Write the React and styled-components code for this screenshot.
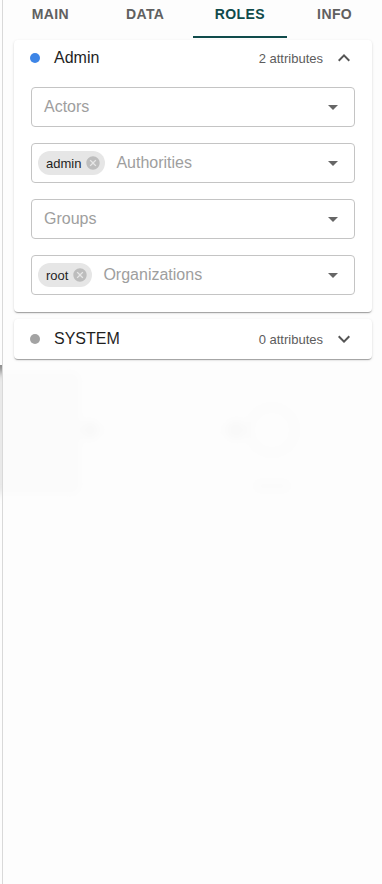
import React from 'react';
import styled, { createGlobalStyle } from 'styled-components';

const GlobalStyle = createGlobalStyle`
  html, body { margin: 0; padding: 0; background: #fdfdfd; }
  body { font-family: "Liberation Sans", Arial, sans-serif; }
`;

const Page = styled.div`
  position: relative;
  width: 382px;
  height: 884px;
  overflow: hidden;
  background: #fdfdfd;
`;

const Canvas = styled.svg`
  position: absolute;
  left: 0;
  top: 0;
`;

const Panel = styled.aside`
  position: absolute;
  left: 2px;
  top: 0;
  right: 0;
  bottom: 0;
  border-left: 1px solid #d9d9d9;
  background: rgba(253, 253, 253, 0.88);
  display: flex;
  flex-direction: column;
`;

const Tabs = styled.nav`
  display: grid;
  grid-template-columns: repeat(4, 1fr);
  height: 38px;
`;

const Tab = styled.div`
  display: flex;
  align-items: flex-start;
  justify-content: center;
  padding-top: 6px;
  box-sizing: border-box;
  font-size: 14px;
  font-weight: 700;
  letter-spacing: 0.4px;
  color: ${p => (p.$active ? '#0f4b4b' : '#606060')};
  border-bottom: 2px solid ${p => (p.$active ? '#0f4b4b' : 'transparent')};
`;

const Body = styled.div`
  padding: 2px 10px 0 11px;
  display: flex;
  flex-direction: column;
  gap: 7px;
`;

const Card = styled.section`
  background: #fff;
  border-radius: 4px;
  box-shadow: 0 2px 1px -1px rgba(0,0,0,0.2), 0 1px 1px 0 rgba(0,0,0,0.14), 0 1px 3px 0 rgba(0,0,0,0.12);
`;

const Header = styled.div`
  display: flex;
  align-items: center;
  height: ${p => (p.$open ? '36px' : '40px')};
  padding: 0 16px;
`;

const Dot = styled.span`
  width: 10px;
  height: 10px;
  border-radius: 50%;
  background: ${p => p.$color};
  margin-right: 14px;
`;

const Name = styled.span`
  flex: 1;
  font-size: 16px;
  color: #1f1f1f;
`;

const Count = styled.span`
  font-size: 13px;
  color: #5c5c5c;
  margin-right: 9px;
`;

const Fields = styled.div`
  display: flex;
  flex-direction: column;
  gap: 16px;
  padding: 11px 17px 17px;
`;

const Field = styled.div`
  height: 40px;
  box-sizing: border-box;
  border: 1px solid #c4c4c4;
  border-radius: 4px;
  display: flex;
  align-items: center;
  padding: 0 16px 0 6px;
  gap: 11px;
`;

const Placeholder = styled.span`
  flex: 1;
  font-size: 16px;
  color: #9e9e9e;
  padding-left: ${p => (p.$bare ? '6px' : '0')};
`;

const Chip = styled.span`
  display: inline-flex;
  align-items: center;
  height: 24px;
  border-radius: 12px;
  background: #e6e6e6;
  padding: 0 4px 0 8px;
  font-size: 13px;
  color: #1f1f1f;
  gap: 4px;
`;

const Chevron = ({ up }) => (
  <svg width="24" height="24" viewBox="0 0 24 24">
    <path
      d={up ? 'M7.41 15.41 12 10.83l4.59 4.58L18 14l-6-6-6 6z' : 'M7.41 8.59 12 13.17l4.59-4.58L18 10l-6 6-6-6z'}
      fill="#555"
    />
  </svg>
);

const Arrow = () => (
  <svg width="10" height="5" viewBox="0 0 10 5">
    <path d="M0 0l5 5 5-5z" fill="#666" />
  </svg>
);

const Cancel = () => (
  <svg width="16" height="16" viewBox="0 0 24 24">
    <path
      d="M12 2C6.47 2 2 6.47 2 12s4.47 10 10 10 10-4.47 10-10S17.53 2 12 2zm5 13.59L15.59 17 12 13.41 8.41 17 7 15.59 10.59 12 7 8.41 8.41 7 12 10.59 15.59 7 17 8.41 13.41 12 17 15.59z"
      fill="#bdbdbd"
    />
  </svg>
);

const Select = ({ label, chip }) => (
  <Field>
    {chip && (
      <Chip>
        {chip}
        <Cancel />
      </Chip>
    )}
    <Placeholder $bare={!chip}>{label}</Placeholder>
    <Arrow />
  </Field>
);

export default function App() {
  return (
    <Page>
      <GlobalStyle />
      <Canvas width="382" height="884">
        <defs>
          <filter id="blur" x="-20%" y="-20%" width="140%" height="140%">
            <feGaussianBlur stdDeviation="4" />
          </filter>
        </defs>
        <rect x="0" y="365" width="3" height="120" fill="#8a8a8a" />
        <g filter="url(#blur)">
          <rect x="-10" y="372" width="90" height="122" rx="6" fill="#e9e9e9" />
          <line x1="95" y1="430" x2="232" y2="430" stroke="#efefef" strokeWidth="3" />
          <circle cx="90" cy="430" r="9" fill="#d8d8d8" />
          <circle cx="236" cy="430" r="10" fill="#d8d8d8" />
          <circle cx="272" cy="430" r="26" fill="#e8e8e8" />
          <circle cx="272" cy="430" r="19" fill="#fff" />
          <rect x="254" y="480" width="36" height="12" rx="3" fill="#ececec" />
        </g>
      </Canvas>
      <Panel>
        <Tabs>
          <Tab>MAIN</Tab>
          <Tab>DATA</Tab>
          <Tab $active>ROLES</Tab>
          <Tab>INFO</Tab>
        </Tabs>
        <Body>
          <Card>
            <Header $open>
              <Dot $color="#3d85e6" />
              <Name>Admin</Name>
              <Count>2 attributes</Count>
              <Chevron up />
            </Header>
            <Fields>
              <Select label="Actors" />
              <Select label="Authorities" chip="admin" />
              <Select label="Groups" />
              <Select label="Organizations" chip="root" />
            </Fields>
          </Card>
          <Card>
            <Header>
              <Dot $color="#a3a3a3" />
              <Name>SYSTEM</Name>
              <Count>0 attributes</Count>
              <Chevron />
            </Header>
          </Card>
        </Body>
      </Panel>
    </Page>
  );
}
